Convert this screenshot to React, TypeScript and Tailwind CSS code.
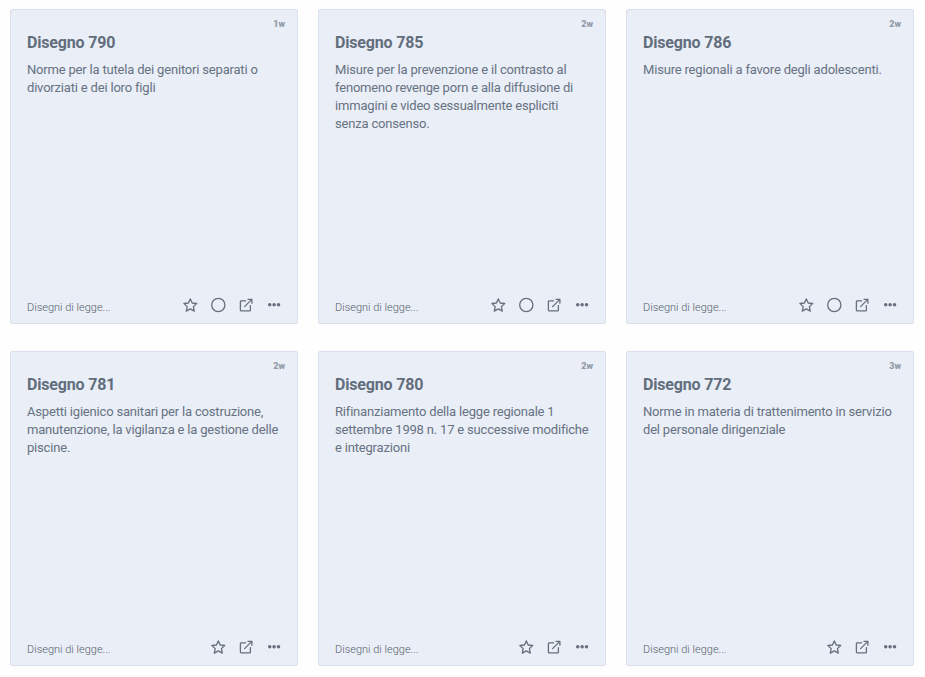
const cards = [
  { id: 790, age: '1w', text: 'Norme per la tutela dei genitori separati o divorziati e dei loro figli', circle: true },
  { id: 785, age: '2w', text: 'Misure per la prevenzione e il contrasto al fenomeno revenge porn e alla diffusione di immagini e video sessualmente espliciti senza consenso.', circle: true },
  { id: 786, age: '2w', text: 'Misure regionali a favore degli adolescenti.', circle: true },
  { id: 781, age: '2w', text: 'Aspetti igienico sanitari per la costruzione, manutenzione, la vigilanza e la gestione delle piscine.', circle: false },
  { id: 780, age: '2w', text: 'Rifinanziamento della legge regionale 1 settembre 1998 n. 17 e successive modifiche e integrazioni', circle: false },
  { id: 772, age: '3w', text: 'Norme in materia di trattenimento in servizio del personale dirigenziale', circle: false },
];

function Icon({ kind }: { kind: 'star' | 'circle' | 'open' | 'more' }) {
  return (
    <svg width="16" height="16" viewBox="0 0 16 16" fill="none" stroke="#666f7b" strokeWidth="1.3" strokeLinejoin="round" strokeLinecap="round">
      {kind === 'star' && <path d="M8.3 1.9l1.9 4.1 4.5.5-3.3 3.1.9 4.5-4-2.2-4 2.2.9-4.5-3.3-3.1 4.5-.5z" />}
      {kind === 'circle' && <circle cx="8.3" cy="8" r="6.6" />}
      {kind === 'open' && (
        <>
          <path d="M7.6 3.8H3.3a.9.9 0 0 0-.9.9v8.2a.9.9 0 0 0 .9.9h8.2a.9.9 0 0 0 .9-.9V8.6" />
          <path d="M6.6 9.6l7.2-7.2M10 2.3h3.9v3.9" />
        </>
      )}
      {kind === 'more' && (
        <g fill="#666f7b" stroke="none">
          <circle cx="3.7" cy="7.8" r="1.75" />
          <circle cx="8.1" cy="7.8" r="1.75" />
          <circle cx="12.5" cy="7.8" r="1.75" />
        </g>
      )}
    </svg>
  );
}

export default function App() {
  return (
    <main className="grid h-[677px] w-[925px] grid-cols-[288px_288px_288px] content-start gap-x-5 gap-y-[27px] overflow-hidden bg-[#fefefe] pl-[10px] pt-[9px] font-[Roboto,sans-serif] text-[#677282]">
      {cards.map((c) => (
        <article key={c.id} className="flex h-[315px] flex-col rounded-[2px] border border-[#dae1ec] bg-[#e9eef7] pl-4">
          <div className="h-[23px] pr-3 pt-[7px] text-right text-[9px] leading-[14px] font-black text-[#929ba8]">{c.age}</div>
          <h2 className="h-[28px] text-[16px] leading-5 font-bold tracking-[-0.18px] text-[#626d7c]">Disegno {c.id}</h2>
          <p className="w-[256px] text-[13px] leading-[18px] tracking-[-0.185px]">{c.text}</p>
          <footer className="mt-auto flex h-9 items-center pr-[15px]">
            <span className="pt-[5px] text-[11px] leading-4 font-light text-[#56606d]">Disegni di legge...</span>
            <div className="ml-auto flex gap-3">
              <Icon kind="star" />
              {c.circle && <Icon kind="circle" />}
              <Icon kind="open" />
              <Icon kind="more" />
            </div>
          </footer>
        </article>
      ))}
    </main>
  );
}
